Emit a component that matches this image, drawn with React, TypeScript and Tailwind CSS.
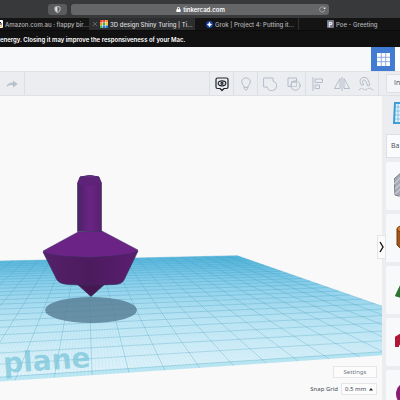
import type { ReactNode } from "react";
import { IoReload } from "react-icons/io5";
import { FaLock } from "react-icons/fa";

// workplane perspective
const ORIGIN = [92, 371];
const VP_X = [2617, 203];
const VP_Y = [86, 203];
const STEP_X = 0.01446;
const STEP_Y = 0.08;
const MIN_X = -14;
const MAX_X = 13;
const MIN_Y = -0.3;
const MAX_Y = 25;

function project(a: number, b: number) {
  const u = a * STEP_X;
  const v = b * STEP_Y;
  const w = 1 + u + v;
  const x = (ORIGIN[0] + u * VP_X[0] + v * VP_Y[0]) / w;
  const y = (ORIGIN[1] + u * VP_X[1] + v * VP_Y[1]) / w;
  return `${x.toFixed(1)} ${y.toFixed(1)}`;
}

function gridPath(step: number) {
  const lines: string[] = [];
  for (let a = MIN_X; a <= MAX_X; a += step) {
    lines.push(`M${project(a, MIN_Y)}L${project(a, MAX_Y)}`);
  }
  for (let b = 0; b <= MAX_Y; b += step) {
    lines.push(`M${project(MIN_X, b)}L${project(MAX_X, b)}`);
  }
  return lines.join("");
}

const outline = `M${project(MIN_X, MIN_Y)}L${project(MAX_X, MIN_Y)}L${project(
  MAX_X,
  MAX_Y
)}L${project(MIN_X, MAX_Y)}Z`;

const band = `M${project(MIN_X, MIN_Y)}L${project(MAX_X, MIN_Y)}L${project(
  MAX_X,
  0
)}L${project(MIN_X, 0)}Z`;

function Workplane() {
  return (
    <svg
      className="absolute left-0 top-0 h-[304px] w-[382px]"
      viewBox="0 96 382 304"
    >
      <defs>
        <linearGradient
          id="plane"
          gradientUnits="userSpaceOnUse"
          x1="0"
          y1="256"
          x2="0"
          y2="380"
        >
          <stop offset="0" stopColor="#78c6ee" />
          <stop offset="0.2" stopColor="#a6dbf3" />
          <stop offset="0.5" stopColor="#ccecf8" />
          <stop offset="1" stopColor="#edf8fc" />
        </linearGradient>
        <linearGradient id="stem" x1="0" x2="1">
          <stop offset="0" stopColor="#4c2267" />
          <stop offset="0.5" stopColor="#6a2484" />
          <stop offset="1" stopColor="#59206f" />
        </linearGradient>
        <linearGradient id="body" x1="0" x2="1">
          <stop offset="0" stopColor="#552069" />
          <stop offset="0.5" stopColor="#4c1b5e" />
          <stop offset="1" stopColor="#5b1e70" />
        </linearGradient>
      </defs>
      <path d={outline} fill="url(#plane)" />
      <path d={band} fill="#9edcec" fillOpacity="0.6" />
      <path
        d={gridPath(0.1)}
        fill="none"
        stroke="#45b2de"
        strokeWidth="0.4"
        strokeOpacity="0.21"
      />
      <path
        d={gridPath(1)}
        fill="none"
        stroke="#3d9abb"
        strokeWidth="0.5"
        strokeOpacity="0.55"
      />
      <text
        x="91"
        y="367"
        textAnchor="end"
        transform="rotate(-4 91 367)"
        fill="#7cc6da"
        fillOpacity="0.75"
        className="font-['DejaVu_Sans'] text-[28px] font-bold"
      >
        plane
      </text>
      <ellipse
        cx="91"
        cy="310"
        rx="46"
        ry="13"
        fill="#557b92"
        fillOpacity="0.8"
      />
      <g strokeWidth="0.6" stroke="#2f3158" strokeLinejoin="round">
        <path d="M77 284L91 296.500L105 284Z" fill="#461750" />
        <path
          d="M43 252L57 280Q60 284 68 284.500Q91 286 115 284.500Q122 284 124 280L138 251Z"
          fill="url(#body)"
        />
        <path
          d="M78 232L43 251Q44 256 91 257.500Q137 255 138 250L102 231Z"
          fill="#6b2486"
          strokeWidth="0.4"
        />
        <path
          d="M77.500 183L80 177Q90 174 99 177L101.500 183V231.500H77.500Z"
          fill="url(#stem)"
        />
        <path
          d="M77.500 184L80 177Q90 174 99 177L101.500 184Q90 187 77.500 184Z"
          fill="#5f2279"
          stroke="none"
        />
        <path
          d="M80 177Q90 174 99 177Q90 179 80 177Z"
          fill="#6f2a8a"
          strokeWidth="0.4"
        />
      </g>
    </svg>
  );
}

function Tab({
  icon,
  title,
  className,
}: {
  icon: ReactNode;
  title: string;
  className: string;
}) {
  return (
    <button
      className={`flex h-full items-center gap-[2px] overflow-hidden whitespace-nowrap ${className}`}
    >
      {icon}
      <span>{title}</span>
    </button>
  );
}

function Browser() {
  return (
    <div className="bg-[#141415] font-['Inter',sans-serif] text-[6px] text-white">
      <div className="flex h-[18px] items-center bg-[#38393b] pt-px">
        <button
          aria-label="Privacy report"
          className="ml-12 flex h-[11px] w-[19px] items-center justify-center rounded-[3px] bg-[#5a5b5d]"
        >
          <svg viewBox="0 0 8 9" className="h-[7px] w-[7px]">
            <path
              d="M4 .5L7.300 1.500V4.500Q7.300 7.200 4 8.500Q.7 7.200 .7 4.500V1.500Z"
              fill="none"
              stroke="#ddd"
            />
            <path d="M4 1V8Q1 7 1 4.500V1.800Z" fill="#ddd" />
          </svg>
        </button>
        <div className="ml-1 mr-[71px] flex h-[11px] flex-1 items-center rounded-[3px] bg-[#656667] px-[3px]">
          <div className="flex flex-1 items-center justify-center gap-[2px] pl-2 font-semibold">
            <FaLock className="h-[5px] w-[5px]" />
            tinkercad.com
          </div>
          <button aria-label="Reload">
            <IoReload className="h-[7px] w-[7px] text-gray-200" />
          </button>
        </div>
      </div>
      <div className="flex h-[13px] items-stretch border-b border-[#0b0b0b] font-medium text-[#b5b5b5]">
        <Tab
          className="w-[89px]"
          title="Amazon.com.au : flappy bir..."
          icon={
            <svg viewBox="0 0 3 8" className="h-2 w-[3px] shrink-0">
              <path d="M0 0H2Q3 0 3 1V7Q3 8 2 8H0Z" fill="#fff" />
              <path d="M0 2L1 3V5" stroke="#111" fill="none" />
              <path d="M0 6.500L2 5.800" stroke="#f90" fill="none" />
            </svg>
          }
        />
        <Tab
          className="w-[106px] bg-[#2d2e30] pl-1 text-[#dcdcdc]"
          title="3D design Shiny Turing | Ti..."
          icon={
            <>
              <svg viewBox="0 0 4 4" className="mr-px h-1 w-1 shrink-0">
                <path d="M0 0L4 4M4 0L0 4" stroke="#999" strokeWidth="0.500" />
              </svg>
              <svg viewBox="0 0 8 8" className="h-2 w-2 shrink-0">
                <path d="M0 0H8V8H0Z" fill="#fff" />
                <path d="M0 0H2.400V2.400H0ZM2.800 0H5.200V2.400H2.800Z" fill="#e8402a" />
                <path d="M5.600 0H8V2.400H5.600ZM0 2.800H2.400V5.200H0Z" fill="#f4912b" />
                <path d="M2.800 2.800H5.200V5.200H2.800ZM0 5.600H2.400V8H0Z" fill="#44ad54" />
                <path d="M5.600 2.800H8V5.200H5.600Z" fill="#f2c531" />
                <path d="M2.800 5.600H5.200V8H2.800ZM5.600 5.600H8V8H5.600Z" fill="#267bc9" />
              </svg>
            </>
          }
        />
        <Tab
          className="w-[104px] border-r border-[#303030] pl-[11px]"
          title="Grok | Project 4: Putting it..."
          icon={
            <svg viewBox="0 0 8 8" className="h-[7px] w-[7px] shrink-0">
              <circle cx="4" cy="4" r="4" fill="#1846a8" />
              <path d="M4 .8L5.200 3L7 4L5.200 5L4 7.200L2.800 5L1 4L2.800 3Z" fill="#fff" />
            </svg>
          }
        />
        <Tab
          className="flex-1 pl-7"
          title="Poe - Greeting"
          icon={
            <span className="flex h-2 w-[7px] items-center justify-center rounded-[1px] bg-[#77788a] font-bold text-white">
              P
            </span>
          }
        />
      </div>
      <p className="h-4 overflow-hidden whitespace-nowrap bg-[#111112] font-semibold leading-[17px]">
        energy. Closing it may improve the responsiveness of your Mac.
      </p>
    </div>
  );
}

function Tool({
  label,
  divider,
  active,
  children,
}: {
  label: string;
  divider?: boolean;
  active?: boolean;
  children: ReactNode;
}) {
  return (
    <button
      aria-label={label}
      className={`flex h-full w-6 items-center justify-center border-l ${
        divider ? "border-[#dcdfe4]" : "border-transparent"
      } ${active ? "text-[#20242c]" : "text-[#b4bdca]"}`}
    >
      <svg
        viewBox="0 0 16 16"
        className="h-4 w-4"
        fill="none"
        stroke="currentColor"
        strokeLinejoin="round"
        strokeLinecap="round"
      >
        {children}
      </svg>
    </button>
  );
}

function Toolbar() {
  return (
    <div className="flex h-[25px] border-y border-[#dfe1e5] bg-[#ecedf0]">
      <button
        aria-label="Redo"
        className="flex w-[25px] items-center justify-center border-r border-[#dcdfe4]"
      >
        <svg viewBox="0 0 12 8" className="h-2 w-3">
          <path
            d="M.5 7Q1 2.500 7 2.500V.5L11.700 4L7 7.500V5.300Q3 4.500 .5 7Z"
            fill="#b7c0cb"
          />
        </svg>
      </button>
      <div className="flex flex-1 justify-end pr-px">
        <Tool label="Show all" divider active>
          <path
            d="M3.500 2H12.500Q14 2 14 3.500V11Q14 12.500 12.500 12.500H10L8 14.500L6 12.500H3.500Q2 12.500 2 11V3.500Q2 2 3.500 2Z"
            strokeWidth="1.200"
          />
          <ellipse cx="8" cy="7.300" rx="3.800" ry="2.500" strokeWidth="1.200" />
          <circle cx="8" cy="7.300" r="1" strokeWidth="1.200" />
        </Tool>
        <Tool label="Hide selected" divider>
          <path d="M6 11Q6 9.500 4.500 8.200Q3 6 4 4Q5.300 1.800 8 1.800T12 4Q13 6 11.500 8.200Q10 9.500 10 11ZM6.300 11V13L8 14.200L9.700 13V11" />
        </Tool>
        <Tool label="Group" divider>
          <path d="M2 2H11V5.200A4.800 4.800 0 1 1 5.200 11H2Z" />
        </Tool>
        <Tool label="Ungroup">
          <path d="M5 10.500H2V2H10.500V5M5.500 6H10" />
          <circle cx="9.500" cy="9.500" r="4.700" />
          <path d="M5.500 6V10.500H10.500V6Z" strokeWidth="0.700" />
        </Tool>
        <Tool label="Align" divider>
          <path d="M3 1.500V14.500M5.500 3H12.500V6.500H5.500ZM5.500 9H9.500V12.500H5.500Z" />
        </Tool>
        <Tool label="Mirror">
          <path d="M8 1.500V14.500M6 3V12.500H.8ZM10 3V12.500H15.200Z" />
        </Tool>
        <Tool label="Cruise">
          <path d="M3.500 9L2.200 6.500Q1.500 2 6 1.300Q9 1 10.200 4L12 9L9.800 10L8 5.500Q7 3.500 5.800 4Q4 4.500 4.700 6.500L5.500 8.200Z" />
          <path d="M1 14Q3 11.500 5 13T9 13T13 12.500L15 14" strokeDasharray="2 1.500" />
        </Tool>
      </div>
      <div className="flex w-[22px] items-center border-l border-[#dcdfe4] pl-[7px]">
        <button className="h-[19px] flex-1 rounded-l-[2px] border border-r-0 border-[#dcdfe4] bg-[#f4f5f7] pl-[7px] text-left font-['Open_Sans',sans-serif] text-[7px] text-[#444b57]">
          In
        </button>
      </div>
    </div>
  );
}

function Shape({ label, children }: { label: string; children: ReactNode }) {
  return (
    <button
      aria-label={label}
      className="flex h-12 w-12 shrink-0 items-center rounded-[2px] bg-[#f8f9fa] pl-2"
    >
      <svg viewBox="0 0 32 32" className="h-8 w-8 shrink-0">
        {children}
      </svg>
    </button>
  );
}

function Sidebar() {
  return (
    <aside className="flex w-[18px] shrink-0 flex-col gap-1 overflow-hidden bg-[#ecedf1] pl-1">
      <button
        aria-label="Workplane"
        className="flex h-[34px] w-12 shrink-0 items-center pl-[7px]"
      >
        <svg viewBox="0 0 24 24" className="h-6 w-6">
          <path d="M2 2H22V22H1Z" fill="#e2f2fb" stroke="#3c9bd3" strokeWidth="2" />
          <path
            d="M5 2V22M9 2V22M13 2V22M17 2V22M2 6H22M2 10H22M2 14H22M2 18H22"
            stroke="#68b4df"
            strokeWidth="0.700"
          />
        </svg>
      </button>
      <button className="h-6 shrink-0 border border-r-0 border-[#dcdfe5] bg-[#fafbfc] pl-1 text-left font-['Open_Sans',sans-serif] text-[7px] text-[#444b57]">
        Ba
      </button>
      <Shape label="Box hole">
        <path d="M0 9L9 1L26 6V23L12 28L1 25Z" fill="#a6a9b3" stroke="#777c88" />
        <path
          d="M0 14L7 7M1 19L15 6M1 24L20 7M5 27L25 10M11 28L26 15"
          stroke="#c6c9d1"
          strokeWidth="1.500"
        />
      </Shape>
      <Shape label="Cylinder">
        <path d="M3 7V23Q8 30 20 27V5Z" fill="#a35316" stroke="#733c15" />
        <ellipse cx="13" cy="7" rx="10" ry="4" fill="#d77b25" stroke="#733c15" />
      </Shape>
      <Shape label="Roof">
        <path d="M1 22L9 5L28 17L18 27Z" fill="#4c9b3e" />
        <path d="M1 22L9 5L18 27Z" fill="#2c7232" />
      </Shape>
      <Shape label="Scribble">
        <path
          d="M3 21V12L8 9L14 16L24 9M3 19L7 14L11 20"
          fill="none"
          stroke="#b31536"
          strokeWidth="4"
        />
      </Shape>
      <Shape label="Sphere">
        <circle cx="14" cy="16" r="12" fill="#8b1c73" />
      </Shape>
    </aside>
  );
}

export default function App() {
  return (
    <div className="flex h-screen flex-col overflow-hidden bg-[#f9f9fa]">
      <Browser />
      <header className="flex h-6 shrink-0 justify-end bg-[#f7f8fa]">
        <button
          aria-label="Dashboard"
          className="flex w-6 items-center justify-center bg-[#427bd2]"
        >
          <svg viewBox="0 0 13 13" className="h-[13px] w-[13px]" fill="#fff">
            <path d="M0 0H13V13H0Z" />
            <path d="M4.300 0V13M8.700 0V13M0 4.300H13M0 8.700H13" stroke="#6f9be0" strokeWidth="0.800" />
          </svg>
        </button>
        <div className="w-[5px] bg-white" />
      </header>
      <Toolbar />
      <div className="flex min-h-0 flex-1">
        <main className="relative flex min-w-0 flex-1 flex-col items-end justify-end gap-[5px] pb-[5px] pr-[5px] font-['Noto_Sans',sans-serif] text-[6px] text-[#454a54]">
          <Workplane />
          <button
            aria-label="Collapse panel"
            className="absolute -right-1 top-[139px] flex h-6 w-[9px] items-center justify-center border border-[#e2e4e8] bg-[#fbfbfc]"
          >
            <svg viewBox="0 0 5 12" className="h-3 w-[5px]">
              <path d="M1 1L4 6L1 11" fill="none" stroke="#151515" strokeWidth="1.400" />
            </svg>
          </button>
          <button className="relative h-3 w-11 border border-[#e4e6ea] bg-[#fcfcfd] leading-[10px] text-[#747983]">
            Settings
          </button>
          <div className="relative flex items-center gap-[3px]">
            <label htmlFor="snap">Snap Grid</label>
            <select
              id="snap"
              className="h-3 w-9 appearance-none border border-[#e4e6ea] bg-[#fcfcfd] pl-[3px] leading-[10px]"
            >
              <option>0.5 mm</option>
            </select>
            <svg
              viewBox="0 0 4 3"
              className="pointer-events-none absolute right-1 top-[5px] h-[3px] w-1"
            >
              <path d="M0 2.500L2 0L4 2.500Z" fill="#222" />
            </svg>
          </div>
        </main>
        <Sidebar />
      </div>
    </div>
  );
}
